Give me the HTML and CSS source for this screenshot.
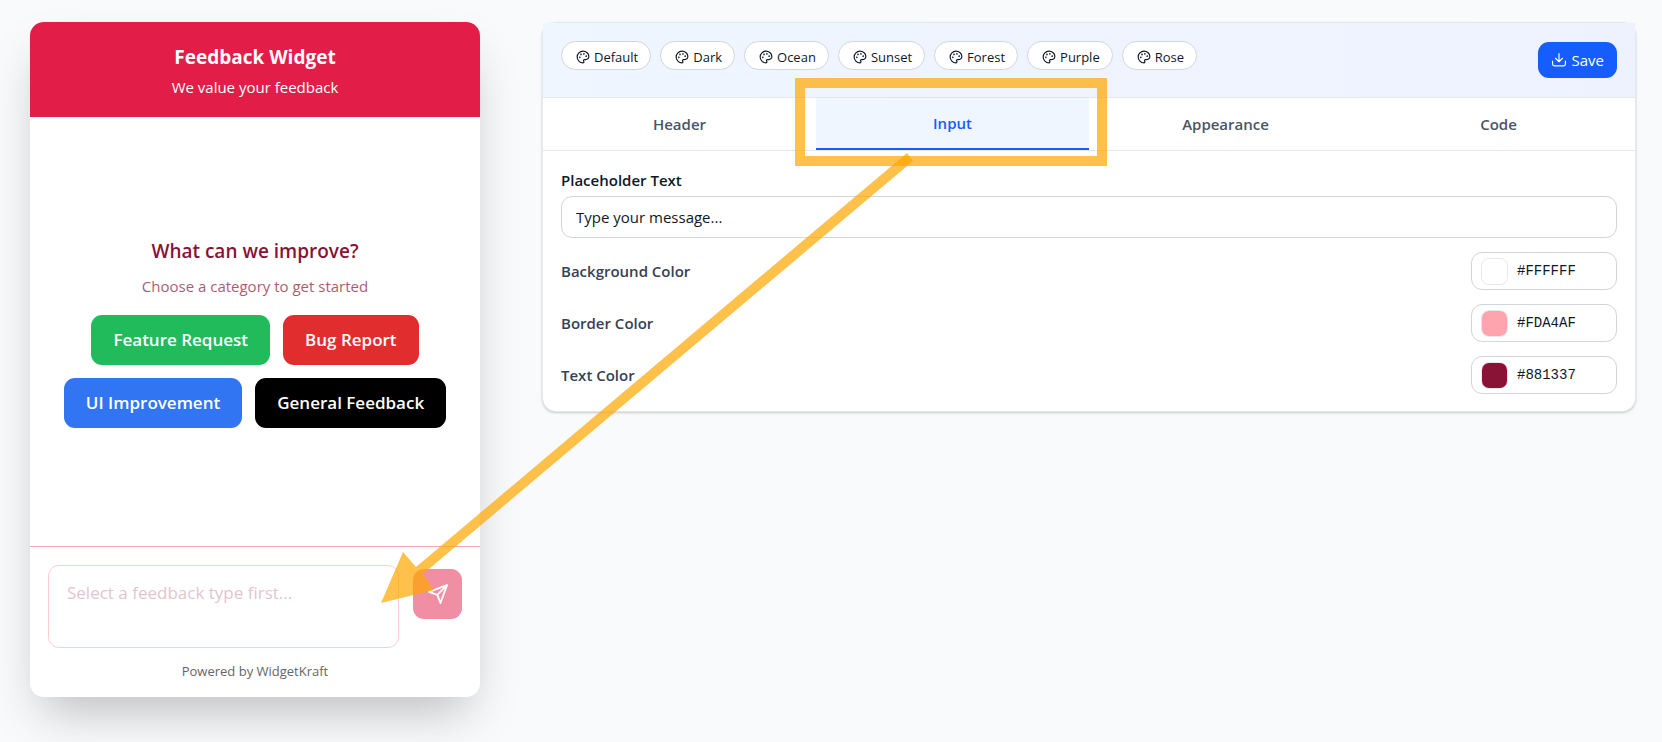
FILE: index.html
```html
<!DOCTYPE html>
<html lang="en">

<head>
    <meta charset="UTF-8">
    <meta name="viewport" content="width=device-width, initial-scale=1.0">
    <title>Feedback Widget</title>
    <link rel="stylesheet" href="styles.css">
</head>

<body>
    <!-- shared icons -->
    <svg class="defs" aria-hidden="true">
        <symbol id="palette" viewBox="0 0 24 24">
            <path d="M12 2C6.500 2 2 6.500 2 12s4.500 10 10 10c.926 0 1.648-.746 1.648-1.688 0-.437-.18-.835-.437-1.125-.29-.289-.438-.652-.438-1.125a1.640 1.640 0 0 1 1.668-1.668h1.996c3.051 0 5.555-2.503 5.555-5.554C21.965 6.012 17.461 2 12 2z"></path>
            <circle class="dot" cx="13.500" cy="6.500" r=".5"></circle>
            <circle class="dot" cx="17.500" cy="10.500" r=".5"></circle>
            <circle class="dot" cx="8.500" cy="7.500" r=".5"></circle>
            <circle class="dot" cx="6.500" cy="12.500" r=".5"></circle>
        </symbol>
    </svg>

    <main class="page">
        <!-- widget preview -->
        <section class="widget">
            <header class="widget-head">
                <h1>Feedback Widget</h1>
                <p>We value your feedback</p>
            </header>

            <div class="widget-body">
                <h2>What can we improve?</h2>
                <p>Choose a category to get started</p>
                <div class="cats">
                    <button type="button" class="cat green">Feature Request</button>
                    <button type="button" class="cat red">Bug Report</button>
                    <button type="button" class="cat blue">UI Improvement</button>
                    <button type="button" class="cat black">General Feedback</button>
                </div>
            </div>

            <footer class="widget-foot">
                <form class="message">
                    <textarea aria-label="Message" placeholder="Select a feedback type first..."></textarea>
                    <button type="button" class="send" aria-label="Send">
                        <svg class="icon" viewBox="0 0 24 24">
                            <path d="M21.800 2.400 14.700 21.800 11.300 13 2.200 9.600z"></path>
                            <path d="M21.800 2.400 11.300 13"></path>
                        </svg>
                    </button>
                </form>
                <p>Powered by WidgetKraft</p>
            </footer>
        </section>

        <!-- settings -->
        <section class="panel">
            <div class="toolbar">
                <div class="themes">
                    <button type="button" class="theme"><svg class="icon"><use href="#palette"></use></svg>Default</button>
                    <button type="button" class="theme"><svg class="icon"><use href="#palette"></use></svg>Dark</button>
                    <button type="button" class="theme"><svg class="icon"><use href="#palette"></use></svg>Ocean</button>
                    <button type="button" class="theme"><svg class="icon"><use href="#palette"></use></svg>Sunset</button>
                    <button type="button" class="theme"><svg class="icon"><use href="#palette"></use></svg>Forest</button>
                    <button type="button" class="theme"><svg class="icon"><use href="#palette"></use></svg>Purple</button>
                    <button type="button" class="theme"><svg class="icon"><use href="#palette"></use></svg>Rose</button>
                </div>
                <button type="button" class="save">
                    <svg class="icon" viewBox="0 0 24 24">
                        <path d="M12 1v14M6 9l6 6 6-6M1 14v5a3 3 0 0 0 3 3h16a3 3 0 0 0 3-3v-5"></path>
                    </svg>
                    Save
                </button>
            </div>

            <nav class="tabs">
                <button type="button" class="tab">Header</button>
                <button type="button" class="tab on">Input</button>
                <button type="button" class="tab">Appearance</button>
                <button type="button" class="tab">Code</button>
            </nav>

            <form class="fields">
                <div class="field">
                    <label for="ph">Placeholder Text</label>
                    <input type="text" id="ph" class="text" value="Type your message...">
                </div>
                <div class="row">
                    <label for="bg">Background Color</label>
                    <div class="color">
                        <input type="color" aria-label="Pick background color" value="#ffffff">
                        <input type="text" id="bg" value="#FFFFFF">
                    </div>
                </div>
                <div class="row">
                    <label for="bd">Border Color</label>
                    <div class="color">
                        <input type="color" aria-label="Pick border color" value="#fda4af">
                        <input type="text" id="bd" value="#FDA4AF">
                    </div>
                </div>
                <div class="row">
                    <label for="tx">Text Color</label>
                    <div class="color">
                        <input type="color" aria-label="Pick text color" value="#881337">
                        <input type="text" id="tx" value="#881337">
                    </div>
                </div>
            </form>
        </section>

        <!-- marker: Input tab -> message box -->
        <svg class="marker" viewBox="0 0 1662 742" aria-hidden="true">
            <rect x="800" y="83" width="302" height="78"></rect>
            <polygon points="907,153 913,161 423,574 434,590 381,603 403,552 416,567"></polygon>
        </svg>
    </main>
</body>

</html>
```
FILE: styles.css
```css
* {
    box-sizing: border-box;
    margin: 0;
    padding: 0;
}

body {
    color: #101828;
    background-color: #f9fafc;
    font-family: "Segoe UI", "Open Sans", "Noto Sans", sans-serif;
    font-size: 15px;
    line-height: 24px;
}

button,
input,
textarea {
    font: inherit;
    color: inherit;
    border: 0;
}

button {
    cursor: pointer;
}

.defs {
    position: absolute;
    width: 0;
    height: 0;
}

.icon {
    flex: none;
    width: 14px;
    height: 14px;
    fill: none;
    stroke: currentColor;
    stroke-width: 2;
    stroke-linecap: round;
    stroke-linejoin: round;
}

.dot {
    fill: currentColor;
}

.page {
    position: relative;
    display: grid;
    grid-template-columns: 450px 1fr;
    gap: 62px;
    align-items: start;
    min-height: 100vh;
    padding: 22px 26px 22px 30px;
}

/* widget */
.widget {
    display: flex;
    flex-direction: column;
    min-height: 675px;
    border-radius: 14px;
    background: #fff;
    box-shadow: 0 25px 50px -12px rgba(0, 0, 0, .25);
    overflow: hidden;
    text-align: center;
}

.widget-head {
    padding: 20px 18px 18px;
    color: #fff;
    background: #e11d48;
}

.widget-head h1 {
    margin-bottom: 2px;
    font-size: 19px;
    line-height: 31px;
    font-weight: 700;
}

.widget-body {
    flex: 1;
    display: flex;
    flex-direction: column;
    align-items: center;
    justify-content: center;
    padding: 0 18px;
    color: #881337;
}

.widget-body h2 {
    margin-bottom: 7px;
    font-size: 19px;
    line-height: 31px;
    font-weight: 600;
}

.widget-body p {
    margin-bottom: 17px;
    opacity: .7;
}

.cats {
    display: flex;
    flex-wrap: wrap;
    justify-content: center;
    gap: 13px;
}

.cat {
    height: 50px;
    padding: 0 22px;
    border-radius: 11px;
    color: #fff;
    font-size: 17px;
    font-weight: 600;
}

.green { background: #22bb5b; }
.red { background: #e12d2d; }
.blue { background: #3175f3; }
.black { background: #000; }

.widget-foot {
    padding: 18px 18px 14px;
    border-top: 1px solid #fda4af;
}

.message {
    display: flex;
    gap: 14px;
    align-items: flex-start;
}

.message textarea {
    flex: 1;
    height: 83px;
    padding: 13px 18px;
    border: 1px solid #fecdd3;
    border-radius: 11px;
    background: #fff;
    font-size: 17px;
    line-height: 27px;
    resize: none;
}

.message textarea::placeholder {
    color: #e2c5ce;
    opacity: 1;
}

.send {
    display: flex;
    align-items: center;
    justify-content: center;
    width: 49px;
    height: 50px;
    margin-top: 4px;
    border-radius: 11px;
    color: #fff;
    background: #f08ea3;
}

.send .icon {
    width: 22px;
    height: 22px;
}

.widget-foot p {
    margin-top: 11px;
    color: #666;
    font-size: 13px;
}

/* settings panel */
.panel {
    border: 1px solid #e5e7eb;
    border-radius: 14px;
    background: #fff;
    box-shadow: 0 1px 3px rgba(0, 0, 0, .1), 0 1px 2px rgba(0, 0, 0, .1);
}

.toolbar {
    display: flex;
    justify-content: space-between;
    gap: 18px;
    padding: 18px;
    height: 75px;
    border-bottom: 1px solid #e5e7eb;
    background: linear-gradient(to right, #eff6ff, #eef2ff);
}

.themes {
    display: flex;
    align-items: flex-start;
    gap: 9px;
}

.theme {
    display: flex;
    align-items: center;
    gap: 4px;
    height: 29px;
    padding: 2px 12px 0 14px;
    border: 1px solid #d1d5dc;
    border-radius: 15px;
    background: #fff;
    font-size: 13px;
}

.save {
    display: flex;
    align-items: center;
    gap: 6px;
    height: 36px;
    margin-top: 1px;
    padding: 0 13px 0 14px;
    border-radius: 11px;
    color: #fff;
    background: #155dfc;
}

.tabs {
    display: grid;
    grid-template-columns: repeat(4, 1fr);
    border-bottom: 1px solid #e5e7eb;
}

.tab {
    height: 52px;
    color: #4a5565;
    background: #fff;
    font-weight: 600;
}

.tab.on {
    color: #155dfc;
    background: #eff6ff;
    border-bottom: 2px solid #155dfc;
}

.fields {
    display: grid;
    gap: 14px;
    padding: 18px 18px 17px;
}

.field {
    display: grid;
    gap: 5px;
    font-weight: 600;
    line-height: 22px;
}

.text {
    width: 100%;
    height: 42px;
    padding: 0 14px;
    border: 1px solid #d1d5dc;
    border-radius: 11px;
    background: #fff;
    font-weight: 400;
}

.row {
    display: flex;
    align-items: center;
    justify-content: space-between;
    color: #364153;
    font-weight: 600;
}

.color {
    display: flex;
    align-items: center;
    gap: 9px;
    width: 146px;
    height: 38px;
    padding: 0 9px;
    border: 1px solid #d1d5dc;
    border-radius: 11px;
    color: #101828;
}

.color input[type="color"] {
    appearance: none;
    flex: none;
    width: 27px;
    height: 27px;
    border: 1px solid #e5e7eb;
    border-radius: 8px;
    background: none;
    overflow: hidden;
}

.color input::-webkit-color-swatch-wrapper {
    padding: 0;
}

.color input::-webkit-color-swatch {
    border: 0;
}

.color input[type="text"] {
    min-width: 0;
    width: 100%;
    background: none;
    font-family: Consolas, "Liberation Mono", monospace;
    font-size: 14px;
    font-weight: 400;
}

/* arrow over the page */
.marker {
    position: absolute;
    top: 0;
    left: 0;
    width: 100%;
    pointer-events: none;
}

.marker rect {
    fill: none;
    stroke: #ffa800;
    stroke-width: 10;
    stroke-opacity: .71;
}

.marker polygon {
    fill: #ffa800;
    fill-opacity: .71;
}
```
